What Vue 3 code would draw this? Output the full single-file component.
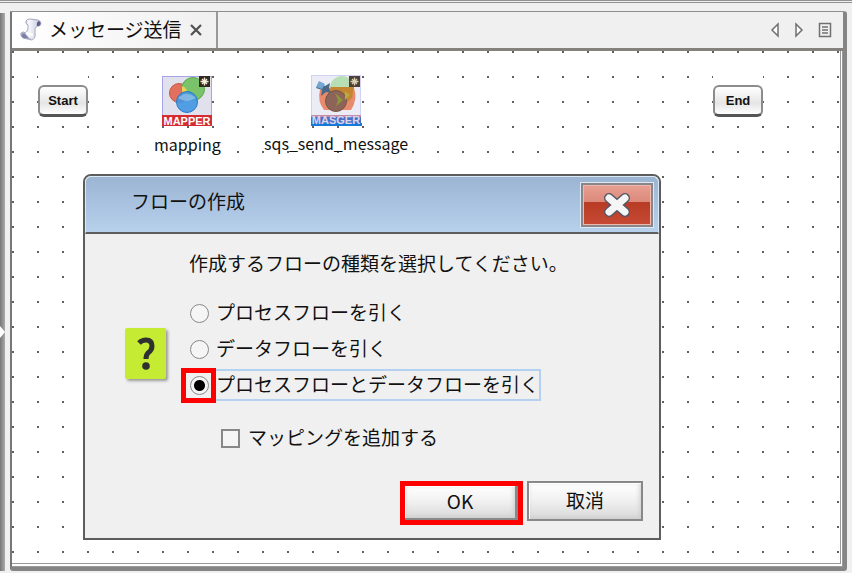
<script setup>
import { ref } from "vue";

const flow = ref("both");
const addMapping = ref(false);
const flows = [
  { value: "process", label: "プロセスフローを引く" },
  { value: "data", label: "データフローを引く" },
  { value: "both", label: "プロセスフローとデータフローを引く" },
];
</script>

<template>
  <div class="page">
    <div class="splitter">
      <svg width="5" height="12" viewBox="0 0 5 12"><path d="M0 0L5 6L0 12Z" fill="#fff" /></svg>
    </div>
    <main class="editor">
      <header class="tab-bar">
        <div class="tab">
          <svg class="tab-icon" viewBox="0 0 22 24">
            <defs>
              <linearGradient id="paper" x1="0" x2="1">
                <stop offset="0" stop-color="#a8aaca" />
                <stop offset=".4" stop-color="#f7f7fc" />
                <stop offset="1" stop-color="#c3c4da" />
              </linearGradient>
            </defs>
            <path d="M6 3Q7 1 10 1L18 2Q21 3 21 6Q20 9 17 8Q14 10 15 15Q16 20 12 22L3 20Q0 18 1 15Q3 13 6 15Q9 11 8 7Q5 6 6 3Z" fill="url(#paper)" stroke="#a6a7bd" />
            <path d="M17 8Q16 4 19 3Q22 5 19 8Z" fill="#5d5d8e" />
            <path d="M2 16Q5 14 6 17Q8 20 12 21L4 20Q1 19 2 16Z" fill="#7d7ea9" />
            <path d="M6 15L13 17" stroke="#fff" stroke-width="2" />
          </svg>
          <span class="tab-title">メッセージ送信</span>
          <button class="plain" type="button" aria-label="閉じる">
            <svg width="14" height="14" viewBox="0 0 14 14"><path d="M2 2L12 12M12 2L2 12" stroke="#505050" stroke-width="2.2" /></svg>
          </button>
        </div>
        <nav class="tools">
          <button class="plain" type="button" aria-label="前へ">
            <svg width="10" height="16" viewBox="0 0 10 16"><path d="M8 2V14L2 8Z" fill="#fff" stroke="#707070" stroke-width="1.5" /></svg>
          </button>
          <button class="plain" type="button" aria-label="次へ">
            <svg width="10" height="16" viewBox="0 0 10 16"><path d="M2 2V14L8 8Z" fill="#fff" stroke="#707070" stroke-width="1.5" /></svg>
          </button>
          <button class="plain" type="button" aria-label="一覧">
            <svg width="14" height="16" viewBox="0 0 14 16"><path d="M1.5 1.500H12.5V14.5H1.5ZM4 5H10M4 8H10M4 11H10" fill="none" stroke="#707070" stroke-width="1.5" /></svg>
          </button>
        </nav>
      </header>

      <section class="canvas">
        <div class="node node-start"><button class="cap" type="button">Start</button></div>
        <div class="node node-mapping">
          <svg class="node-icon" viewBox="0 0 50 50">
            <rect x=".5" y=".5" width="49" height="49" fill="#e1e1ed" stroke="#a5a5e8" />
            <circle cx="17" cy="17" r="9.5" fill="#e2705f" stroke="#c75545" />
            <circle cx="31" cy="13" r="11.5" fill="#7ac36b" stroke="#5aa64d" />
            <path d="M20 10Q25 12 26 18L20 20Z" fill="#ead454" />
            <circle cx="25" cy="26" r="10.5" fill="#4297e2" fill-opacity=".9" stroke="#2879c8" />
            <path d="M16 22Q25 14 34 22Q25 28 16 22Z" fill="#a5cbee" opacity=".6" />
            <rect y="39" width="50" height="11" fill="#d32d32" />
            <text x="25" y="49" text-anchor="middle" class="icon-text">MAPPER</text>
            <rect x="37" width="11" height="11" fill="#35291d" />
            <path d="M42.5 1.5V9.500M38.5 5.500H46.500M40 3L45 8M45 3L40 8" stroke="#f4edd8" stroke-width="1.3" />
          </svg>
          <span class="node-label">mapping</span>
        </div>
        <div class="node node-sqs">
          <svg class="node-icon" viewBox="0 0 50 50">
            <rect x=".5" y=".5" width="49" height="49" fill="#ececf6" stroke="#d1d1f3" />
            <circle cx="31" cy="13" r="12" fill="#b7dfb3" />
            <path d="M9 15Q20 10 43 13Q47 24 40 35H13Q6 26 9 15Z" fill="#e78a6d" />
            <path d="M20 12H43L41 23L34 29L18 20Z" fill="#c58632" />
            <circle cx="25" cy="26" r="10.5" fill="#8c6558" stroke="#755447" />
            <path d="M24 18L32 25L25 31L27 25Z" fill="#8d963e" />
            <path d="M34 16L39 20L34 25Z" fill="#b6ad3f" />
            <path d="M8 8L14 11L19 8L18 13L20 18L15 17L10 21L11 15L5 13Z" fill="#496786" />
            <path d="M8 6L14 9L11 14L5 12Z" fill="#71a6d2" />
            <rect y="40" width="50" height="10" fill="#486fc4" />
            <path d="M0 48H51V51H0Z" fill="#1879d9" />
            <path d="M0 40H50V42H0Z" fill="#c58ca9" />
            <text x="25" y="49" text-anchor="middle" class="icon-text icon-text-faded">MASGER</text>
            <rect x="38" y="1" width="11" height="11" fill="#4d3f35" />
            <path d="M43.5 2.500V10.500M39.500 6.500H47.500M41 4L46 9M46 4L41 9" stroke="#d9d0b4" stroke-width="1.3" />
          </svg>
          <span class="node-label">sqs_send_message</span>
        </div>
        <div class="node node-end"><button class="cap" type="button">End</button></div>

        <form class="dialog" role="dialog" aria-labelledby="dialog-title" @submit.prevent>
          <header class="dialog-head">
            <h1 id="dialog-title">フローの作成</h1>
            <button class="dialog-close" type="button" aria-label="閉じる">
              <svg width="30" height="26" viewBox="0 0 30 26">
                <path d="M7 6L23 20M23 6L7 20" stroke="#535765" stroke-width="10" stroke-linecap="round" />
                <path d="M7 6L23 20M23 6L7 20" stroke="#f5f5f5" stroke-width="7" stroke-linecap="round" />
              </svg>
            </button>
          </header>
          <div class="dialog-body">
            <div class="question" aria-hidden="true">
              <svg width="18" height="34" viewBox="0 0 18 34">
                <path d="M2 6Q5 3 9 3Q15 3 15 9Q15 13 11 16Q9 18 9 22" fill="none" stroke="#303030" stroke-width="5" />
                <circle cx="9" cy="29" r="3.8" fill="#303030" />
              </svg>
            </div>
            <div class="choices">
              <p>作成するフローの種類を選択してください。</p>
              <div v-for="item in flows" :key="item.value" class="choice">
                <span :class="{ tick: true, marked: item.value === 'both' }">
                  <input :id="item.value" v-model="flow" type="radio" name="flow" :value="item.value" />
                </span>
                <label :for="item.value" :class="{ focused: flow === item.value }">{{ item.label }}</label>
              </div>
              <div class="choice mapping-choice">
                <input id="add-mapping" v-model="addMapping" type="checkbox" />
                <label for="add-mapping">マッピングを追加する</label>
              </div>
            </div>
          </div>
          <footer class="dialog-actions">
            <div class="action marked-action"><button type="submit">OK</button></div>
            <div class="action"><button type="button">取消</button></div>
          </footer>
        </form>
      </section>
    </main>
  </div>
</template>

<style>
body {
  background: #f0f0f0;
}
</style>

<style scoped>
.page {
  display: flex;
  gap: 5px;
  box-sizing: border-box;
  min-height: 100vh;
  padding: 8px 5px 2px 0;
  border-top: 3px double #929292;
  background: #f0f0f0;
  color: #111;
  font: 19px/24px "Noto Sans CJK JP", sans-serif;
}

button,
input {
  margin: 0;
  font: inherit;
  color: inherit;
}

svg {
  display: block;
}

.splitter {
  display: flex;
  align-items: center;
  width: 5px;
  margin-top: 2px;
  padding-top: 80px;
  background: linear-gradient(90deg, #777, #aaa);
}

.editor {
  display: flex;
  flex: 1;
  flex-direction: column;
  border: 1px solid #888;
  border-width: 1px 4px 4px 2px;
  border-color: #8e8e8e #858585 #858585 #777;
  border-radius: 0 3px 3px 3px;
}

.tab-bar {
  display: flex;
  justify-content: space-between;
  height: 36px;
  border-bottom: 3px solid #85827e;
}

.tab {
  display: flex;
  align-items: center;
  gap: 7px;
  padding: 0 13px 0 8px;
  border-right: 2px solid #999;
  background: linear-gradient(90deg, #fff, #f0f0f0);
}

.tab-icon {
  width: 22px;
  height: 24px;
}

.tab-title {
  padding-bottom: 2px;
}

.plain {
  padding: 0;
  border: 0;
  background: none;
}

.tools {
  display: flex;
  align-items: center;
  gap: 14px;
  padding-right: 11px;
}

.canvas {
  position: relative;
  flex: 1;
  border-right: 3px double #999;
  border-bottom: 4px double #999;
  /* two pixel grid dots, one every 25 pixels */
  background: conic-gradient(from 270deg at 2px 2px, #606060 90deg, transparent 0) 0 0 / 25px 25px #fff;
}

/* nodes are placed freely on the grid */
.node {
  position: absolute;
  display: flex;
  flex-direction: column;
  align-items: center;
}

.node-start {
  top: 25px;
  left: 26px;
}

.node-mapping {
  top: 25px;
  left: 142px;
}

.node-sqs {
  top: 24px;
  left: 252px;
}

.node-end {
  top: 25px;
  left: 701px;
}

.node-start,
.node-end {
  justify-content: center;
  width: 50px;
  height: 50px;
  background: #fff;
}

.cap {
  width: 50px;
  height: 32px;
  padding: 0;
  border: 2px solid #8c8c8c;
  border-bottom: 3px solid #555;
  border-radius: 6px;
  background: linear-gradient(#fff, #e5e5e5 60%, #fff);
  font: bold 13px/20px "Liberation Sans", Arial, sans-serif;
}

.node-icon {
  width: 50px;
  height: 50px;
  overflow: visible;
}

.node-label {
  margin-top: 6px;
  font-size: 16px;
}

.icon-text {
  fill: #fff;
  font: bold 11px "Liberation Sans", sans-serif;
}

.icon-text-faded {
  fill: #d8d4ec;
}

.dialog {
  position: absolute;
  top: 123px;
  left: 71px;
  box-sizing: border-box;
  width: 578px;
  border: 2px solid #5d5d5d;
  border-radius: 8px 8px 0 0;
  background: #f0f0f0;
}

.dialog-head {
  display: flex;
  align-items: center;
  justify-content: space-between;
  height: 55px;
  padding: 0 5px 0 45px;
  border: 1px solid #dbe8f5;
  border-bottom: 2px solid #5d5d5d;
  border-radius: 6px 6px 0 0;
  background: linear-gradient(#9bb5d3, #b7d0ec);
}

h1,
p {
  margin: 0;
  font: inherit;
}

h1 {
  padding-bottom: 8px;
}

.dialog-close {
  display: flex;
  align-items: center;
  justify-content: center;
  width: 72px;
  height: 44px;
  padding: 0;
  border: 2px solid #8a8589;
  outline: 1px solid #dce8f4;
  box-shadow: inset 0 0 0 1px #efb8ad;
  background: linear-gradient(#e7a093, #dc897a 42%, #b83b25 43%, #c74b34);
}

.dialog-body {
  display: flex;
  gap: 15px;
  padding: 17px 20px 0 40px;
}

.question {
  display: flex;
  align-items: center;
  justify-content: center;
  width: 41px;
  height: 51px;
  margin-top: 77px;
  border-radius: 2px;
  background: #c5eb32;
  box-shadow: 2px 2px 3px #999;
}

.choices p {
  padding: 0 0 20px 8px;
}

.choice {
  display: flex;
  align-items: center;
  height: 36px;
}

.tick {
  display: flex;
  align-items: center;
  justify-content: center;
  box-sizing: border-box;
  width: 35px;
  height: 35px;
  padding-left: 2px;
}

.marked {
  border: 5px solid #f00;
}

input {
  box-sizing: border-box;
  flex: none;
  width: 19px;
  height: 19px;
  appearance: none;
  border: 2px solid #888;
  background: #f5f5f5;
}

input[type="radio"] {
  border-width: 1px;
  border-radius: 50%;
}

input[type="radio"]:checked {
  background: radial-gradient(circle, #000 5px, #f5f5f5 6px);
}

.choice label {
  padding: 1px 0 3px;
  border: 2px solid transparent;
  border-left: 0;
}

.choice .focused {
  border-color: #b5d1f1;
}

.mapping-choice {
  gap: 8px;
  margin-top: 17px;
  padding-left: 40px;
}

.dialog-actions {
  display: flex;
  justify-content: flex-end;
  gap: 4px;
  padding: 25px 16px 13px;
}

.action {
  box-sizing: border-box;
  height: 44px;
}

.action button {
  box-sizing: border-box;
  width: 116px;
  height: 40px;
  padding: 0 0 3px;
  border: 2px solid #888;
  box-shadow: inset 1px 1px 0 #fff, inset -1px -1px 5px #ccc;
  background: linear-gradient(#fff, #f2f2f2 45%, #d9d9d9);
}

.marked-action {
  border: 5px solid #f00;
}

.marked-action button {
  width: 113px;
  height: 34px;
  border-width: 0 3px 2px 0;
}
</style>
